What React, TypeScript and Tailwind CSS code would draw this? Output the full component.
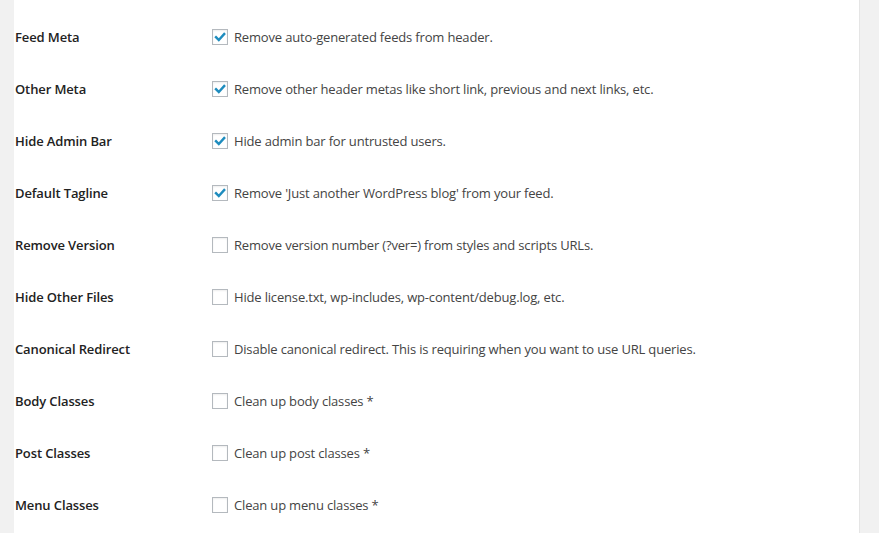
import React from 'react';

type Option = {
  label: string;
  text: string;
  checked: boolean;
};

const options: Option[] = [
  { label: 'Feed Meta', text: 'Remove auto-generated feeds from header.', checked: true },
  { label: 'Other Meta', text: 'Remove other header metas like short link, previous and next links, etc.', checked: true },
  { label: 'Hide Admin Bar', text: 'Hide admin bar for untrusted users.', checked: true },
  { label: 'Default Tagline', text: "Remove 'Just another WordPress blog' from your feed.", checked: true },
  { label: 'Remove Version', text: 'Remove version number (?ver=) from styles and scripts URLs.', checked: false },
  { label: 'Hide Other Files', text: 'Hide license.txt, wp-includes, wp-content/debug.log, etc.', checked: false },
  { label: 'Canonical Redirect', text: 'Disable canonical redirect. This is requiring when you want to use URL queries.', checked: false },
  { label: 'Body Classes', text: 'Clean up body classes *', checked: false },
  { label: 'Post Classes', text: 'Clean up post classes *', checked: false },
  { label: 'Menu Classes', text: 'Clean up menu classes *', checked: false },
];

const Checkbox: React.FC<{ checked: boolean }> = ({ checked }) => (
  <span className="flex h-4 w-4 shrink-0 items-center justify-center border border-[#b4b9be] bg-white shadow-[inset_0_1px_2px_rgba(0,0,0,0.07)]">
    {checked && (
      <svg width="14" height="14" viewBox="0 0 14 14">
        <path d="M3 7.2 L5.8 10 L11.2 4" fill="none" stroke="#1e8cbe" strokeWidth="2.4" strokeLinecap="square" />
      </svg>
    )}
  </span>
);

export default function App() {
  return (
    <div className="flex h-[533px] w-full overflow-hidden bg-[#f1f1f1] font-['Open_Sans',sans-serif]">
      <div className="ml-[14px] w-[846px] shrink-0 border-r border-[#e5e5e5] bg-white pt-[11px]">
        {options.map(opt => (
          <div key={opt.label} className="flex h-[52px] items-center">
            <div className="w-[198px] shrink-0 pl-px pt-[2px] text-[13px] font-semibold tracking-[-0.12px] text-[#222]">
              {opt.label}
            </div>
            <label className="flex items-center gap-[6px] text-[13px] text-[#444]">
              <Checkbox checked={opt.checked} />
              <span className="pt-[2px] tracking-[-0.17px]">{opt.text}</span>
            </label>
          </div>
        ))}
      </div>
    </div>
  );
}
